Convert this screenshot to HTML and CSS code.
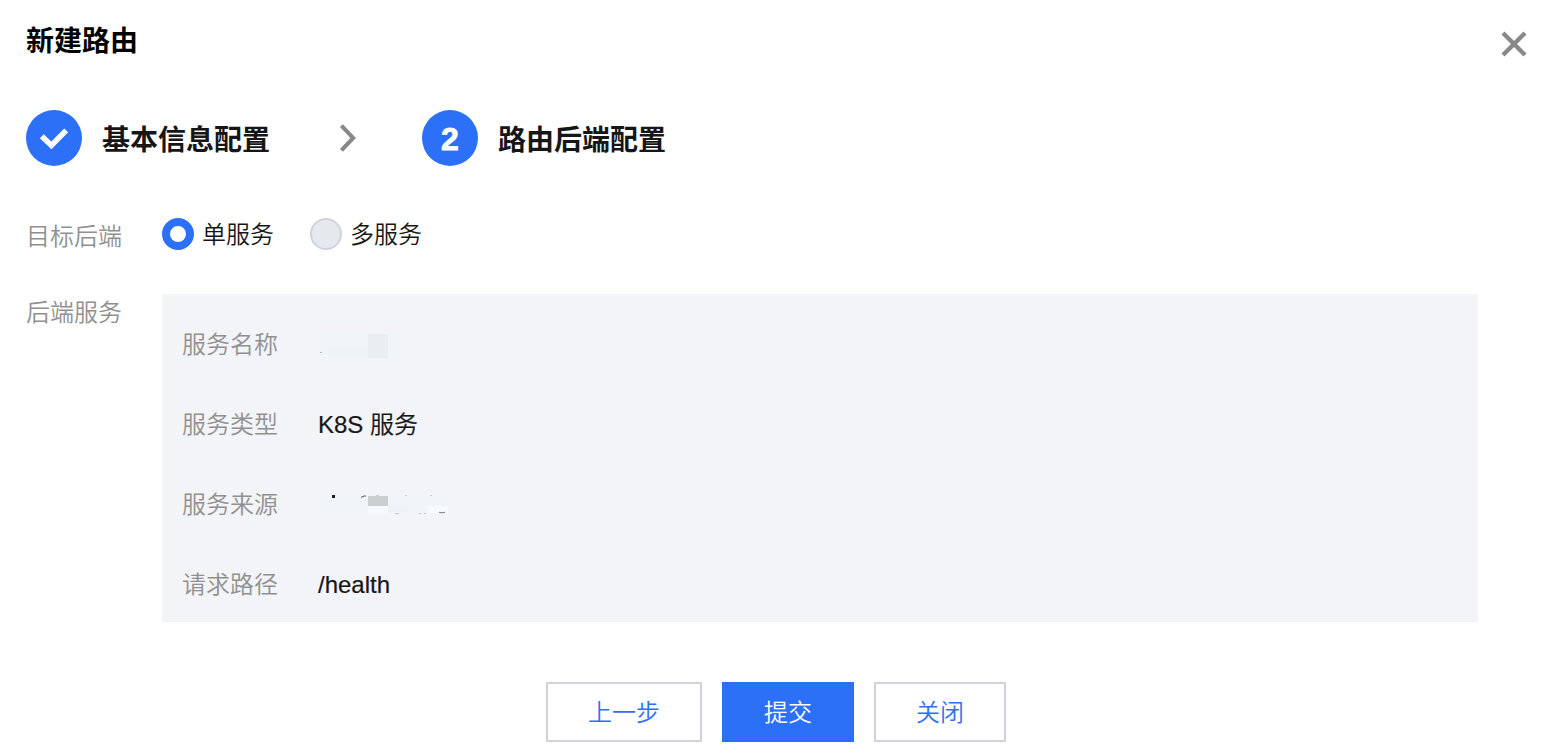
FILE: index.html
```html
<!DOCTYPE html>
<html lang="zh-CN">
<head>
    <meta charset="UTF-8">
    <meta name="viewport" content="width=device-width, initial-scale=1.0">
    <title>新建路由</title>
    <link rel="stylesheet" href="styles.css">
</head>
<body>
    <div class="dialog">

        <!-- 标题 -->
        <header class="dialog-header">
            <h1 class="dialog-title">新建路由</h1>
            <button type="button" class="dialog-close" aria-label="关闭">
                <svg width="28" height="28" viewBox="0 0 28 28" fill="none" stroke="#888888" stroke-width="4.4">
                    <path d="M3 3l22 22M25 3L3 25"/>
                </svg>
            </button>
        </header>

        <!-- 步骤条 -->
        <div class="steps">
            <div class="step">
                <span class="step-num">
                    <svg width="56" height="56" viewBox="0 0 56 56" fill="none" stroke="#ffffff" stroke-width="5.6">
                        <path d="M15.8 26.2l9.6 9.2L40.2 20.4"/>
                    </svg>
                </span>
                <span class="step-title">基本信息配置</span>
            </div>
            <svg class="step-arrow" width="20" height="28" viewBox="0 0 20 28" fill="none" stroke="#888888" stroke-width="4">
                <path d="M3.4 1.6L15.2 14L3.4 26.4"/>
            </svg>
            <div class="step">
                <span class="step-num">2</span>
                <span class="step-title">路由后端配置</span>
            </div>
        </div>

        <!-- 表单 -->
        <div class="form">
            <div class="form-row">
                <div class="form-label target-label">目标后端</div>
                <div class="radio-group">
                    <span class="radio"><i class="radio-icon checked"></i>单服务</span>
                    <span class="radio"><i class="radio-icon"></i>多服务</span>
                </div>
            </div>
            <div class="form-row">
                <div class="form-label">后端服务</div>
                <div class="service-box">
                    <div class="service-row">
                        <div class="form-label">服务名称</div>
                        <svg class="mask" width="150" height="36" viewBox="0 0 150 36">
                            <rect x="0" y="8" width="90" height="24" fill="#f1f4f8"/>
                            <rect x="10" y="20" width="40" height="12" fill="#eff4f6"/>
                            <rect x="50" y="8" width="20" height="24" fill="#e9eef1"/>
                            <rect x="2" y="26" width="2" height="1" fill="#b9bdc0"/>
                        </svg>
                    </div>
                    <div class="service-row">
                        <div class="form-label">服务类型</div>
                        <div class="service-value">K8S 服务</div>
                    </div>
                    <div class="service-row">
                        <div class="form-label">服务来源</div>
                        <svg class="mask" width="150" height="36" viewBox="0 0 150 36">
                            <rect x="0" y="10" width="130" height="18" fill="#f1f4f8"/>
                            <rect x="50" y="10" width="20" height="10" fill="#cacecf"/>
                            <rect x="50" y="20" width="20" height="8" fill="#f5f9fb"/>
                            <rect x="70" y="20" width="20" height="6" fill="#eef2f4"/>
                            <rect x="110" y="20" width="20" height="7" fill="#f8fbfe"/>
                            <rect x="14" y="9" width="3" height="3" fill="#1f1f1f"/>
                            <path d="M43 11.4l3-1.4h2" stroke="#555555" fill="none"/>
                            <path d="M58 9.5h3M87 9.5h2M112 9.5h2" stroke="#cfd2d4"/>
                            <path d="M77 27.5h4M101 27.5h2M106 27.5h2" stroke="#c4c7ca"/>
                            <path d="M121 26.2q3 1.4 6 0" stroke="#777b7e" fill="none"/>
                        </svg>
                    </div>
                    <div class="service-row">
                        <div class="form-label">请求路径</div>
                        <div class="service-value">/health</div>
                    </div>
                </div>
            </div>
        </div>

        <!-- 底部按钮 -->
        <footer class="dialog-footer">
            <button type="button" class="btn">上一步</button>
            <button type="button" class="btn btn-primary">提交</button>
            <button type="button" class="btn">关闭</button>
        </footer>
    </div>
</body>
</html>
```
FILE: styles.css
```css
* {
    box-sizing: border-box;
}

body {
    margin: 0;
    background-color: #ffffff;
    color: #161616;
    font-family: "Liberation Sans", "Noto Sans CJK SC", sans-serif;
    font-size: 24px;
    font-weight: 350;
    line-height: 38px;
}

.dialog {
    height: 754px;
    padding: 20px 26px 0;
    overflow: hidden;
}

/* 标题 */
.dialog-header {
    display: flex;
    justify-content: space-between;
    height: 90px;
}

.dialog-title {
    margin: 0;
    color: #000000;
    font-size: 28px;
    font-weight: bold;
    line-height: 44px;
}

.dialog-close {
    width: 28px;
    height: 28px;
    margin: 10px -2px 0 0;
    padding: 0;
    border: 0;
    background: none;
}

.dialog-close svg {
    display: block;
}

/* 步骤条 */
.steps {
    display: flex;
    align-items: center;
    height: 56px;
}

.step {
    display: flex;
    align-items: center;
    gap: 20px;
}

.step-num {
    width: 56px;
    height: 56px;
    border-radius: 50%;
    background-color: #2d70f8;
    color: #ffffff;
    font-size: 32px;
    font-weight: bold;
    line-height: 58px;
    text-align: center;
    -webkit-text-stroke: 0.8px #ffffff;
}

.step-num svg {
    display: block;
}

.step-title {
    padding-top: 5px;
    font-size: 28px;
    font-weight: bold;
}

.step-arrow {
    margin: 0 64px 0 68px;
}

/* 表单 */
.form {
    padding-top: 52px;
}

.form-row {
    display: flex;
    margin-bottom: 44px;
}

.form-label {
    flex: none;
    width: 136px;
    color: #909090;
}

.target-label {
    height: 32px;
}

.radio-group {
    display: flex;
    gap: 36px;
    height: 32px;
    line-height: 34px;
}

.radio {
    display: flex;
    gap: 8px;
}

.radio-icon {
    width: 32px;
    height: 32px;
    border: 2px solid #cfd3de;
    border-radius: 50%;
    background-color: #e5e8ed;
}

.radio-icon.checked {
    border: 8px solid #2d70f8;
    background-color: #ffffff;
}

/* 后端服务 */
.service-box {
    width: 1316px;
    height: 328px;
    padding: 32px 20px 20px;
    background-color: #f2f4f8;
}

.service-row {
    display: flex;
    height: 36px;
    margin-bottom: 44px;
}

.service-value {
    -webkit-text-stroke: 0.2px #161616;
}

.mask {
    display: block;
}

/* 底部按钮 */
.dialog-footer {
    display: flex;
    justify-content: center;
    gap: 20px;
    padding-top: 16px;
}

.btn {
    height: 60px;
    padding: 0 40px 4px;
    border: 2px solid #cfd3de;
    background-color: #ffffff;
    color: #2d70f8;
    font-family: inherit;
    font-size: 24px;
    font-weight: inherit;
}

.btn-primary {
    border-color: #2d70f8;
    background-color: #2d70f8;
    color: #ffffff;
}
```
